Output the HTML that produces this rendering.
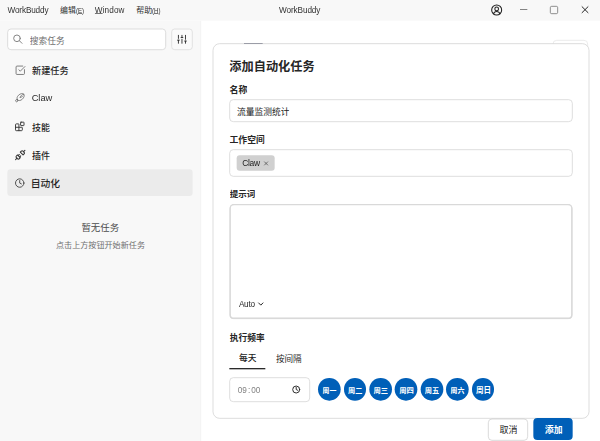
<!DOCTYPE html>
<html lang="zh-CN">
<head>
<meta charset="utf-8">
<title>WorkBuddy</title>
<style>
html,body{width:600px;height:441px;overflow:hidden;background:#fff;margin:0;padding:0}
#app{position:absolute;left:0;top:0;width:900px;height:661.5px;overflow:hidden;transform:scale(0.6666667);transform-origin:0 0}
*{box-sizing:border-box;margin:0;padding:0}
#app{font-family:"Liberation Sans",sans-serif;font-size:13.5px;color:#222;-webkit-font-smoothing:antialiased}
.t{position:absolute;display:block;overflow:hidden;white-space:nowrap;font-weight:inherit}
.t .x{position:absolute;left:0;top:0;white-space:nowrap;letter-spacing:0;font-family:"Liberation Sans","Noto Sans CJK SC",sans-serif}
.l{position:absolute;display:block;line-height:1;white-space:nowrap;will-change:opacity}
.nar{transform:scaleX(0.76);transform-origin:0 50%}
.ic{position:absolute;display:block;overflow:visible}
u{text-decoration-thickness:0.9px;text-underline-offset:1.2px}
.titlebar{position:absolute;left:0;top:0;width:900px;height:31.01px;background:#f8f8f8;border-bottom:1px solid #fbfbfb;z-index:2}
.wmin{position:absolute;left:780.3px;top:13.65px;width:11.1px;height:1.05px;background:#4a4a4a}
.wmax{position:absolute;left:825.45px;top:9.45px;width:11.25px;height:11.25px;border:1px solid #5a5a5a;border-radius:2.4px}
.sidebar{position:absolute;left:0;top:30px;width:301.5px;height:631.5px;background:#f8f8f8;border-right:1px solid #ececec}
.search{position:absolute;width:237.9px;height:32.1px;background:#fff;border:1px solid #cdcdcd;border-radius:5.4px}
.filter{position:absolute;width:32.1px;height:32.1px;background:#fafafa;border:1px solid #d6d6d6;border-radius:4.95px}
.nav{position:absolute;left:11.1px;top:-30px;width:277.95px}
.row{position:absolute;left:0;width:277.95px;height:40.2px;border-radius:4.95px;display:block}
.row.sel{background:#ebebeb}
.main{position:absolute;left:301.5px;top:30px;width:598.5px;height:631.5px;background:#fff}
.main>*{position:absolute}
.peekline{left:64.95px;top:34.5px;width:28.05px;height:1.01px;background:#787b8b;display:block}
.peekbtn{left:527.4px;top:30px;width:53.1px;height:18px;border:1px solid #e2e2e2;border-radius:6px;display:block}
.modal{position:absolute;margin-left:-301.5px;margin-top:-30px;width:564.9px;height:563.1px;background:#fff;border:1px solid #cbcbcb;border-radius:10.5px}
.modal h2,.modal label{font-size:inherit}
.field{position:absolute;background:#fff;border:1px solid #cfcfcf;border-radius:6px}
.field.area{border:0;box-shadow:inset 0 0 0 2px #d9d9d9,inset 0 -0.75px 0 2px #d6d6d6;border-radius:7.05px}
.tm b{font-weight:normal;margin:0 1.65px}
.chip{position:absolute;width:57.3px;height:22.5px;background:#d0d0d0;border-radius:4.5px;display:block}
.tabs{position:absolute;width:120px;height:33px}
.tabs .ul{position:absolute;left:0;width:54.3px;height:2.01px;background:#2a2a2a;display:block}
.days{position:absolute;height:34.5px;width:270px}
.day{position:absolute;top:0;width:33.75px;height:34.05px;border-radius:50%;background:#005fb8;display:block}
.btn{position:absolute;border:0;font:inherit;display:block}
.btn.cancel{width:59.85px;height:32.85px;margin:0;background:#fff;border:1px solid #c9c9c9;border-radius:6px}
.btn.ok{width:59.4px;height:33px;background:#005fb8;border-radius:6px}
</style>
</head>
<body>
<div id="app">
<header class="titlebar"><span class="l menu" style="left:11.25px;top:8.56px;font-size:12.3px;color:#333;letter-spacing:-0.22px;">WorkBuddy</span><span class="t" style="left:90px;top:9.4px;width:23.73px;height:14px;"><span class="x" style="font-size:11.87px;line-height:14px;color:#333;font-weight:400">编辑</span></span><span class="l menu nar" style="left:114.3px;top:8.6px;font-size:12px;color:#333;">(<u>E</u>)</span><span class="l menu" style="left:142.2px;top:8.56px;font-size:12.3px;color:#333;letter-spacing:0.15px;"><u>W</u>indow</span><span class="t" style="left:204.3px;top:9.25px;width:24.11px;height:14.22px;"><span class="x" style="font-size:12.06px;line-height:14.22px;color:#333;font-weight:400">帮助</span></span><span class="l menu nar" style="left:228.45px;top:8.6px;font-size:12px;color:#333;">(<u>H</u>)</span><span class="l wtitle" style="left:418.5px;top:9.09px;font-size:12.3px;color:#333;letter-spacing:-0.15px;">WorkBuddy</span><svg class="ic" style="left:735.6px;top:6px" width="18" height="18" viewBox="0 0 24 24" fill="none" stroke="#1f1f1f" stroke-width="2.1" stroke-linecap="round" stroke-linejoin="round"><circle cx="12" cy="12" r="10"/><circle cx="12" cy="9.8" r="3.7"/><path d="M5.7 19.7a6.5 6.5 0 0 1 12.6 0"/></svg><i class="wmin"></i><i class="wmax"></i><svg class="ic" style="left:872.4px;top:9.45px" width="11.1" height="11.1" viewBox="0 0 10 10" fill="none" stroke="#1f1f1f" stroke-width="1.3" stroke-linecap="round"><path d="M1 1l8 8M9 1l-8 8"/></svg></header>
<aside class="sidebar"><div class="search" style="left:10.65px;top:12.9px"><svg class="ic" style="left:6.75px;top:5.85px" width="17.1" height="17.1" viewBox="0 0 24 24" fill="none" stroke="#808080" stroke-width="2" stroke-linecap="round"><circle cx="10.5" cy="10.5" r="7"/><path d="M15.8 15.8L21 21"/></svg><span class="t" style="left:32.98px;top:9.84px;width:52.47px;height:15.48px;"><span class="x" style="font-size:13.12px;line-height:15.48px;color:#6f6f6f;font-weight:400">搜索任务</span></span></div><div class="filter" style="left:256.95px;top:12.9px"><svg class="ic" style="left:7.25px;top:6.95px" width="15.9" height="15.9" viewBox="0 0 24 24" fill="none" stroke="#2a2a2a" stroke-width="2.05" stroke-linecap="round"><path d="M4 21v-7M4 10V3M12 21v-9M12 8V3M20 21v-5M20 12V3M2 14h4M10 8h4M18 16h4"/></svg></div><nav class="nav"><a class="row" style="top:84.45px"><svg class="ic" style="left:10.73px;top:12.23px" width="16.8" height="16.8" viewBox="0 0 24 24" fill="none" stroke="#767676" stroke-width="2.0" stroke-linecap="round" stroke-linejoin="round"><path d="M21 10.656V19a2 2 0 0 1-2 2H5a2 2 0 0 1-2-2V5a2 2 0 0 1 2-2h12.344"/><path d="m9 11 3 3L22 4"/></svg><span class="t" style="left:36.87px;top:14.75px;width:55.09px;height:16.26px;"><span class="x" style="font-size:13.77px;line-height:16.26px;color:#1f1f1f;font-weight:500">新建任务</span></span></a><a class="row" style="top:126.75px"><svg class="ic" style="left:9.98px;top:11.55px" width="17.4" height="17.4" viewBox="0 0 24 24" fill="none" stroke="#666" stroke-width="1.5" stroke-linecap="round" stroke-linejoin="round"><g transform="rotate(-43 12 12)"><path d="M5.6 12c0-3.2 3.6-5.7 8.2-5.7s9.4 2.3 9.4 5.7-4.8 5.7-9.4 5.7S5.6 15.2 5.6 12Z"/><circle cx="3.2" cy="12" r="2.3"/><path d="M23 12c-3-1.9-6.6-1.9-9.8-.1"/><path d="M13.3 11.9c1.6 1.5 3.8 2.1 6 1.800"/></g></svg><span class="l" style="left:36.45px;top:12.6px;font-size:14px;color:#2a2a2a;letter-spacing:-0.08px;">Claw</span></a><a class="row" style="top:169.05px"><svg class="ic" style="left:11.25px;top:12.9px" width="15.3" height="15.3" viewBox="0 0 24 24" fill="none" stroke="#333" stroke-width="2.2" stroke-linecap="round" stroke-linejoin="round"><path d="M10 22V7a1 1 0 0 0-1-1H4a2 2 0 0 0-2 2v12a2 2 0 0 0 2 2h12a2 2 0 0 0 2-2v-5a1 1 0 0 0-1-1H2"/><rect x="14" y="2" width="8" height="8" rx="1"/></svg><span class="t" style="left:36.9px;top:14.88px;width:26.97px;height:15.91px;"><span class="x" style="font-size:13.48px;line-height:15.91px;color:#1f1f1f;font-weight:500">技能</span></span></a><a class="row" style="top:211.35px"><svg class="ic" style="left:10.43px;top:12.75px" width="16.8" height="16.8" viewBox="0 0 24 24" fill="none" stroke="#333" stroke-width="2.2" stroke-linecap="round" stroke-linejoin="round"><path d="m19 5 3-3"/><path d="m2 22 3-3"/><path d="M6.3 20.3a2.4 2.4 0 0 0 3.4 0L12 18l-6-6-2.3 2.3a2.4 2.4 0 0 0 0 3.4Z"/><path d="M7.5 13.5 10 11"/><path d="M10.5 16.5 13 14"/><path d="m12 6 6 6 2.3-2.3a2.4 2.4 0 0 0 0-3.4l-2.6-2.6a2.4 2.4 0 0 0-3.4 0Z"/></svg><span class="t" style="left:36.93px;top:14.82px;width:27.08px;height:15.98px;"><span class="x" style="font-size:13.53px;line-height:15.98px;color:#1f1f1f;font-weight:500">插件</span></span></a><a class="row sel" style="top:253.65px"><svg class="ic" style="left:10.95px;top:12.98px" width="15.15" height="15.15" viewBox="0 0 24 24" fill="none" stroke="#444" stroke-width="2.2" stroke-linecap="round" stroke-linejoin="round"><circle cx="12" cy="12" r="10"/><path d="M12 6v6l4 2"/></svg><span class="t" style="left:35.09px;top:14.31px;width:43.86px;height:17.25px;"><span class="x" style="font-size:14.62px;line-height:17.25px;color:#1f1f1f;font-weight:500">自动化</span></span></a></nav><span class="t" style="left:122.1px;top:303.76px;width:56.51px;height:16.66px;"><span class="x" style="font-size:14.13px;line-height:16.66px;color:#4c4c4c;font-weight:400">暂无任务</span></span><span class="t" style="left:83.94px;top:331.44px;width:133.59px;height:14.33px;"><span class="x" style="font-size:12.15px;line-height:14.33px;color:#6f6f6f;font-weight:400">点击上方按钮开始新任务</span></span></aside>
<main class="main"><i class="peekbtn"></i><section class="modal" style="left:319px;top:64.65px"><h2 class="t" style="left:24.03px;top:24.55px;width:127.92px;height:21.57px;"><span class="x" style="font-size:18.27px;line-height:21.57px;color:#262626;font-weight:700">添加自动化任务</span></h2><label class="t" style="left:24.16px;top:61.17px;width:26.84px;height:15.84px;"><span class="x" style="font-size:13.42px;line-height:15.84px;color:#262626;font-weight:700">名称</span></label><div class="field" style="left:23.79px;top:83.59px;width:515.25px;height:33.9px"><span class="t" style="left:10.62px;top:10.3px;width:78.91px;height:15.52px;"><span class="x" style="font-size:13.15px;line-height:15.52px;color:#222;font-weight:400">流量监测统计</span></span></div><label class="t" style="left:24.26px;top:136.29px;width:53.03px;height:15.64px;"><span class="x" style="font-size:13.26px;line-height:15.64px;color:#262626;font-weight:700">工作空间</span></label><div class="field" style="left:23.79px;top:158.15px;width:515.25px;height:41.1px"><span class="chip" style="left:10.25px;top:8.29px"><span class="l" style="left:8.25px;top:5.78px;font-size:12.67px;color:#222;letter-spacing:-0.41px;">Claw</span><svg class="ic" style="left:41.25px;top:9px" width="6.3" height="6.3" viewBox="0 0 8 8" fill="none" stroke="#555" stroke-width="1.5" stroke-linecap="round"><path d="M1 1l6 6M7 1l-6 6"/></svg></span></div><label class="t" style="left:24.55px;top:218.19px;width:38.37px;height:15.09px;"><span class="x" style="font-size:12.79px;line-height:15.09px;color:#262626;font-weight:700">提示词</span></label><div class="field area" style="left:23.79px;top:240.34px;width:515.25px;height:172.95px"><span class="l" style="left:14.55px;top:144.54px;font-size:12.3px;color:#2a2a2a;letter-spacing:-0.38px;">Auto</span><svg class="ic" style="left:43.05px;top:147.45px" width="8.4" height="6.3" viewBox="0 0 11.2 8.4" fill="none" stroke="#1c1c1c" stroke-width="1.9" stroke-linecap="round" stroke-linejoin="round"><path d="M1.3 1.9l4.3 4.4 4.3-4.4"/></svg></div><label class="t" style="left:24.49px;top:432.97px;width:52.5px;height:15.5px;"><span class="x" style="font-size:13.12px;line-height:15.5px;color:#262626;font-weight:700">执行频率</span></label><div class="tabs" style="left:24.09px;top:454.85px"><span class="t" style="left:14.4px;top:9.96px;width:26.31px;height:15.52px;"><span class="x" style="font-size:13.15px;line-height:15.52px;color:#1c1c1c;font-weight:500">每天</span></span><span class="t" style="left:69.96px;top:10.1px;width:38.51px;height:15.15px;"><span class="x" style="font-size:12.84px;line-height:15.15px;color:#262626;font-weight:400">按间隔</span></span><i class="ul" style="top:31.2px"></i></div><div class="field time" style="left:23.79px;top:500.44px;width:121.2px;height:36.45px"><span class="l tm" style="left:11.75px;top:11.69px;font-size:12.3px;color:#808080;">09<b>:</b>00</span><svg class="ic" style="left:93.42px;top:11.14px" width="12.6" height="12.6" viewBox="0 0 24 24" fill="none" stroke="#222" stroke-width="2.7" stroke-linecap="round" stroke-linejoin="round"><circle cx="12" cy="12" r="10"/><path d="M12 6v6l4 2"/></svg></div><div class="days" style="left:157.29px;top:501.79px"><span class="day" style="left:0px"><span class="t" style="left:6.27px;top:11.43px;width:21.54px;height:12.71px;"><span class="x" style="font-size:10.77px;line-height:12.71px;color:#fff;font-weight:700">周一</span></span></span><span class="day" style="left:38.4px"><span class="t" style="left:6.27px;top:11.38px;width:21.73px;height:12.83px;"><span class="x" style="font-size:10.88px;line-height:12.83px;color:#fff;font-weight:700">周二</span></span></span><span class="day" style="left:76.8px"><span class="t" style="left:6.27px;top:11.34px;width:21.9px;height:12.91px;"><span class="x" style="font-size:10.95px;line-height:12.91px;color:#fff;font-weight:700">周三</span></span></span><span class="day" style="left:115.2px"><span class="t" style="left:6.27px;top:11.32px;width:21.96px;height:12.96px;"><span class="x" style="font-size:10.98px;line-height:12.96px;color:#fff;font-weight:700">周四</span></span></span><span class="day" style="left:153.6px"><span class="t" style="left:6.27px;top:11.4px;width:21.69px;height:12.79px;"><span class="x" style="font-size:10.85px;line-height:12.79px;color:#fff;font-weight:700">周五</span></span></span><span class="day" style="left:192px"><span class="t" style="left:6.27px;top:11.67px;width:21.6px;height:12.75px;"><span class="x" style="font-size:10.8px;line-height:12.75px;color:#fff;font-weight:700">周六</span></span></span><span class="day" style="left:230.4px"><span class="t" style="left:6.25px;top:11.12px;width:22.75px;height:13.42px;"><span class="x" style="font-size:11.37px;line-height:13.42px;color:#fff;font-weight:700">周日</span></span></span></div></section><i class="peekline"></i><button class="btn cancel" style="left:430.5px;top:598.35px"><span class="t" style="left:16.18px;top:8.14px;width:27.05px;height:15.96px;"><span class="x" style="font-size:13.52px;line-height:15.96px;color:#262626;font-weight:400">取消</span></span></button><button class="btn ok" style="left:498.3px;top:597.15px"><span class="t" style="left:17.33px;top:10.33px;width:26.91px;height:15.88px;"><span class="x" style="font-size:13.46px;line-height:15.88px;color:#fff;font-weight:700">添加</span></span></button></main>
</div>
</body>
</html>
